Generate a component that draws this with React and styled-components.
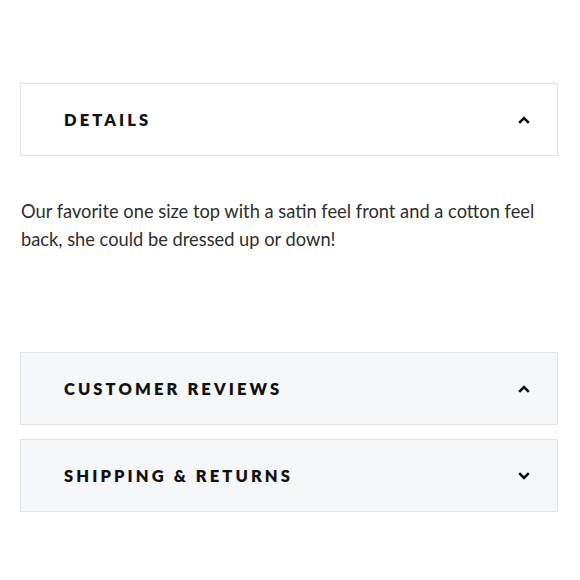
import React from "react";
import styled, { createGlobalStyle } from "styled-components";

const Global = createGlobalStyle`
  html, body { margin: 0; padding: 0; background: #fff; }
  body { font-family: "Lato", "Noto Sans", sans-serif; }
`;

const Page = styled.div`
  padding: 83px 22px 0 20px;
  display: flex;
  flex-direction: column;
`;

const Panel = styled.section`
  border: 1px solid #e3e4e6;
  background: ${(p) => (p.$muted ? "#f6f7f8" : "#fff")};
  margin-top: ${(p) => p.$mt || 0}px;
`;

const Header = styled.div`
  height: 71px;
  display: flex;
  align-items: center;
  justify-content: space-between;
  padding: 0 27px 0 43px;
`;

const Title = styled.h3`
  margin: 0;
  font-family: "Lato", "Noto Sans", sans-serif;
  font-weight: 800;
  font-size: 16.5px;
  letter-spacing: 3.1px;
  color: #111;
  text-transform: uppercase;
`;

const Body = styled.p`
  margin: 41px 0 0 1px;
  font-family: "Lato", "Noto Sans", sans-serif;
  font-size: 18.3px;
  line-height: 28px;
  color: #2e2e2e;
`;

const Chevron = ({ up }) => (
  <svg width="12" height="8" viewBox="0 0 12 8" aria-hidden="true">
    <path
      d={up ? "M1.2 6.8 L6 2 L10.8 6.8" : "M1.2 1.2 L6 6 L10.8 1.2"}
      fill="none"
      stroke="#111"
      strokeWidth="2.6"
    />
  </svg>
);

const Section = ({ title, up, muted, mt }) => (
  <Panel $muted={muted} $mt={mt}>
    <Header>
      <Title>{title}</Title>
      <Chevron up={up} />
    </Header>
  </Panel>
);

export default function App() {
  return (
    <>
      <Global />
      <Page>
        <Section title="Details" up />
        <Body>
          Our favorite one size top with a satin feel front and a cotton feel
          back, she could be dressed up or down!
        </Body>
        <Section title="Customer Reviews" up muted mt={99} />
        <Section title="Shipping & Returns" muted mt={14} />
      </Page>
    </>
  );
}
